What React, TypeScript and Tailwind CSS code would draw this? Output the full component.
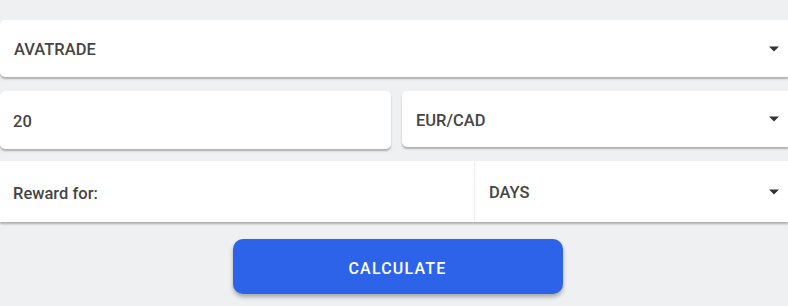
import React from 'react';

const Caret = () => (
    <svg width="12" height="6" viewBox="0 0 12 6" className="shrink-0">
        <path d="M1 0.5h10L6 5.5z" fill="#333" />
    </svg>
);

const SelectBox: React.FC<{ value: string; className?: string }> = ({ value, className = '' }) => (
    <div className={`flex items-center justify-between bg-white pl-[14px] pr-[8px] ${className}`}>
        <span className="pt-[4px] text-[16.5px] font-medium text-[#454545]">{value}</span>
        <Caret />
    </div>
);

export default function App() {
    return (
        <div className="w-[788px] h-[306px] bg-[#eff0f2] overflow-hidden pt-[20px]" style={{ fontFamily: 'Roboto, "Liberation Sans", sans-serif' }}>
            {/* Broker */}
            <SelectBox value="AVATRADE" className="h-[57px] rounded-l-[5px] shadow-[0_2px_2px_rgba(0,0,0,0.28)]" />

            {/* Amount + pair */}
            <div className="flex gap-[11px] mt-[14px]">
                <div className="w-[391px] h-[58px] bg-white rounded-[5px] flex items-center pl-[13px] shadow-[0_2px_2px_rgba(0,0,0,0.28)]">
                    <span className="pt-[4px] text-[16.5px] font-medium text-[#454545]">20</span>
                </div>
                <SelectBox value="EUR/CAD" className="flex-1 h-[56px] rounded-l-[5px] shadow-[0_2px_2px_rgba(0,0,0,0.28)]" />
            </div>

            {/* Reward period */}
            <div className="flex h-[61px] mt-[12px] bg-white shadow-[0_2px_2px_rgba(0,0,0,0.28)]">
                <div className="w-[475px] flex items-center pl-[13px] border-r border-[#eeeeee]">
                    <span className="pt-[5px] text-[16.5px] font-medium text-[#454545]">Reward for:</span>
                </div>
                <SelectBox value="DAYS" className="flex-1 pl-[14px]" />
            </div>

            <div className="flex justify-center mt-[17px]">
                <button className="ml-[7px] w-[330px] h-[55px] pt-[4px] rounded-[10px] bg-[#2c63e8] text-white text-[16px] font-medium tracking-[1.2px] shadow-[0_3px_4px_rgba(0,0,0,0.3)]">
                    CALCULATE
                </button>
            </div>
        </div>
    );
}
